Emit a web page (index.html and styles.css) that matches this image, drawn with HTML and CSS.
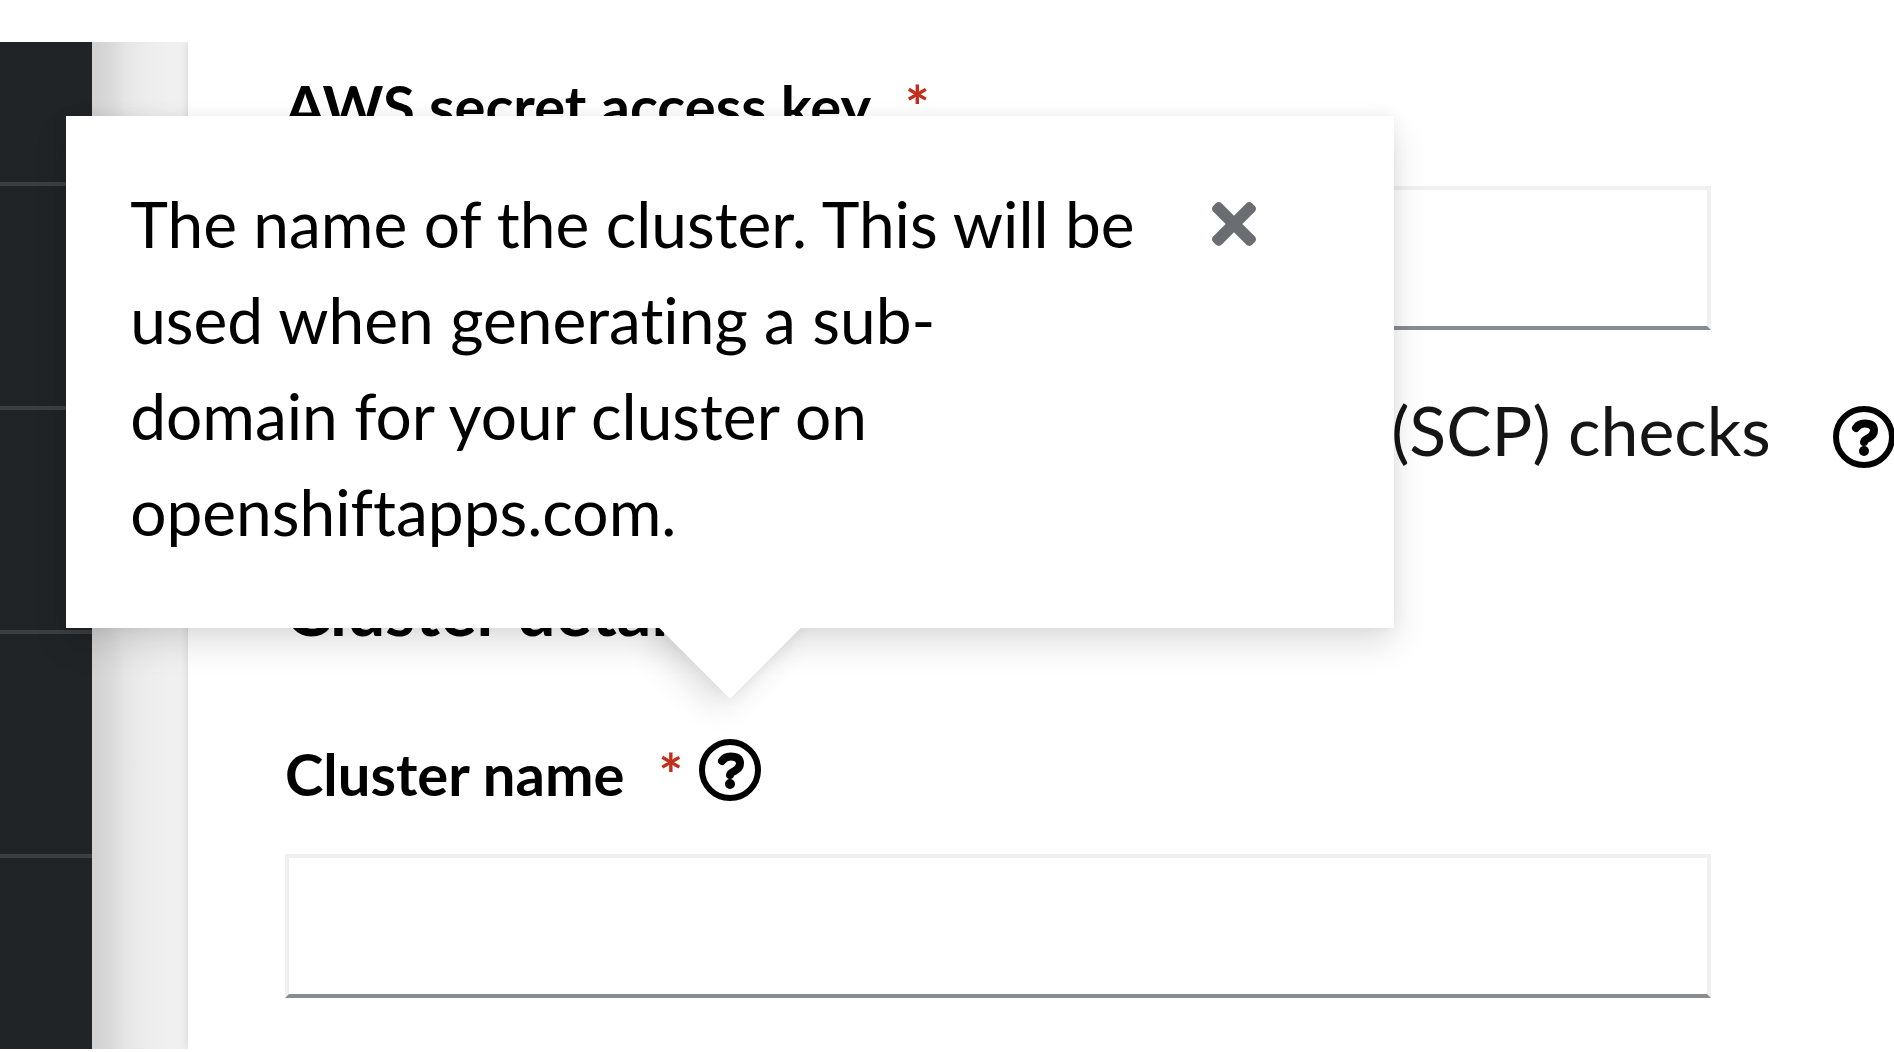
FILE: index.html
```html
<!DOCTYPE html>
<html lang="en">

<head>
    <meta charset="UTF-8">
    <title>Create cluster</title>
    <link rel="stylesheet" href="styles.css">
</head>

<body>
    <div class="page">
        <nav class="sidebar">
            <div class="nav-item"></div>
            <div class="nav-item"></div>
            <div class="nav-item"></div>
            <div class="nav-item"></div>
        </nav>

        <main class="content">
            <form class="form">
                <!-- AWS secret access key -->
                <div class="label-row">
                    <label for="secretKey">AWS secret access key</label>
                    <span class="required">*</span>
                </div>
                <input type="text" id="secretKey" class="text-input" name="secretKey">

                <!-- SCP checks -->
                <div class="check-row">
                    <input type="checkbox" id="scpChecks" name="scpChecks">
                    <label for="scpChecks">Bypass AWS service control policy (SCP) checks</label>
                    <button type="button" class="help-button" aria-label="More information on SCP checks">
                        <svg viewBox="0 0 62 62">
                            <circle cx="31" cy="31" r="28" />
                            <path d="M23 22q3-4.500 8.500-4.500q9.500 0 9.500 7q0 4.500-5.500 7.500q-4.500 2.200-4.500 4" />
                            <circle class="dot" cx="31" cy="45" r="5" />
                        </svg>
                    </button>
                </div>

                <h2>Cluster details</h2>

                <!-- Cluster name -->
                <div class="label-row">
                    <label for="clusterName">Cluster name</label>
                    <span class="required">*</span>
                    <div class="help">
                        <button type="button" class="help-button" aria-label="More information on cluster name">
                            <svg viewBox="0 0 62 62">
                                <circle cx="31" cy="31" r="28" />
                                <path d="M23 22q3-4.500 8.500-4.500q9.500 0 9.500 7q0 4.500-5.500 7.500q-4.500 2.200-4.500 4" />
                                <circle class="dot" cx="31" cy="45" r="5" />
                            </svg>
                        </button>
                        <div class="popover" role="dialog">
                            <div class="popover-arrow"></div>
                            <div class="popover-content">
                                <p>The name of the cluster. This will be used when generating a sub-domain for your cluster on openshiftapps.com.</p>
                                <button type="button" class="close-button" aria-label="Close">
                                    <svg viewBox="0 80 352 352">
                                        <path d="M242.720 256l100.070-100.070c12.280-12.280 12.280-32.190 0-44.480l-22.240-22.240c-12.280-12.280-32.190-12.280-44.480 0L176 189.280 75.930 89.210c-12.280-12.280-32.190-12.280-44.480 0L9.210 111.450c-12.280 12.280-12.280 32.190 0 44.480L109.280 256 9.210 356.070c-12.280 12.280-12.280 32.190 0 44.480l22.240 22.240c12.280 12.280 32.200 12.280 44.480 0L176 322.720l100.070 100.070c12.280 12.280 32.200 12.280 44.480 0l22.240-22.240c12.280-12.280 12.280-32.190 0-44.480L242.720 256z" />
                                    </svg>
                                </button>
                            </div>
                        </div>
                    </div>
                </div>
                <input type="text" id="clusterName" class="text-input" name="clusterName">
            </form>
        </main>
    </div>
</body>

</html>
```
FILE: styles.css
```css
* {
    box-sizing: border-box;
}

body {
    margin: 0;
    padding: 42px 0 3px;
    font-family: Lato, "Open Sans", sans-serif;
    font-size: 64px;
    font-variant-ligatures: none;
    line-height: 96px;
    color: #000;
    background-color: #fff;
    overflow: hidden;
}

/* The gradient is the shade that the sidebar throws on the page */
.page {
    display: flex;
    min-height: calc(100vh - 45px);
    background: linear-gradient(to right, #d2d2d2 96px, #dadada 112px, #e6e6e6 126px, #ededed 150px, #f0f0f0 170px);
    overflow: hidden;
}

.sidebar {
    flex: 0 0 92px;
    margin-right: 96px;
    padding-top: 140px;
    background-color: #212427;
}

.nav-item {
    height: 224px;
    border-top: 4px solid #3c3f42;
}

.nav-item:last-child {
    height: auto;
}

.content {
    flex: 1;
    min-width: 0;
    padding: 22px 0 40px 97px;
    background-color: #fff;
    box-shadow: 0 0 8px rgba(3, 3, 3, 0.12);
}

.label-row {
    display: flex;
    align-items: center;
    height: 84px;
    margin-bottom: 38px;
    font-size: 58px;
    line-height: 84px;
    font-weight: bold;
}

.required {
    margin-left: 34px;
    font-size: 58px;
    color: #c0301c;
}

.text-input {
    display: block;
    width: calc(100% - 183px);
    height: 144px;
    padding: 0 32px;
    border: 4px solid #f0f0f0;
    border-bottom-color: #8a8d90;
    background-color: #fff;
    font: inherit;
    outline: none;
}

.check-row {
    display: flex;
    align-items: center;
    margin-top: 52px;
    font-size: 68px;
    color: #151515;
    white-space: nowrap;
}

.check-row input {
    flex: none;
    width: 44px;
    height: 44px;
    margin: 0 24px 0 0;
}

.check-row .help-button {
    margin: 14px 0 0 62px;
}

h2 {
    margin: 84px 0 74px;
    font-size: 68px;
    line-height: 96px;
    font-weight: bold;
}

.help {
    position: relative;
    margin: 0 0 8px 16px;
}

.help-button,
.close-button {
    display: block;
    flex: none;
    padding: 0;
    border: none;
    background: none;
    cursor: pointer;
}

.help-button svg {
    display: block;
    width: 62px;
    height: 62px;
    fill: none;
    stroke: #000;
    stroke-width: 6;
}

.help-button path {
    stroke-width: 8;
    stroke-linecap: round;
}

.help-button .dot {
    fill: #000;
    stroke: none;
}

/* Popover sits above the help icon */
.popover {
    position: absolute;
    bottom: calc(100% + 111px);
    left: 50%;
    width: 1328px;
    transform: translateX(-50%);
    font-size: 64px;
    line-height: 96px;
    font-weight: normal;
    box-shadow: 0 16px 32px rgba(3, 3, 3, 0.12), 0 0 16px rgba(3, 3, 3, 0.06);
}

.popover-content {
    position: relative;
    display: flex;
    justify-content: space-between;
    padding: 60px 138px 68px 64px;
    background-color: #fff;
}

.popover-content p {
    width: 1008px;
    margin: 0;
}

.popover-arrow {
    position: absolute;
    bottom: -50px;
    left: 50%;
    width: 100px;
    height: 100px;
    margin-left: -50px;
    background-color: #fff;
    box-shadow: 0 16px 32px rgba(3, 3, 3, 0.12), 0 0 16px rgba(3, 3, 3, 0.06);
    transform: rotate(45deg);
}

.close-button {
    align-self: flex-start;
    margin-top: 26px;
}

.close-button svg {
    display: block;
    width: 44px;
    height: 44px;
    fill: #6a6e73;
}
```
